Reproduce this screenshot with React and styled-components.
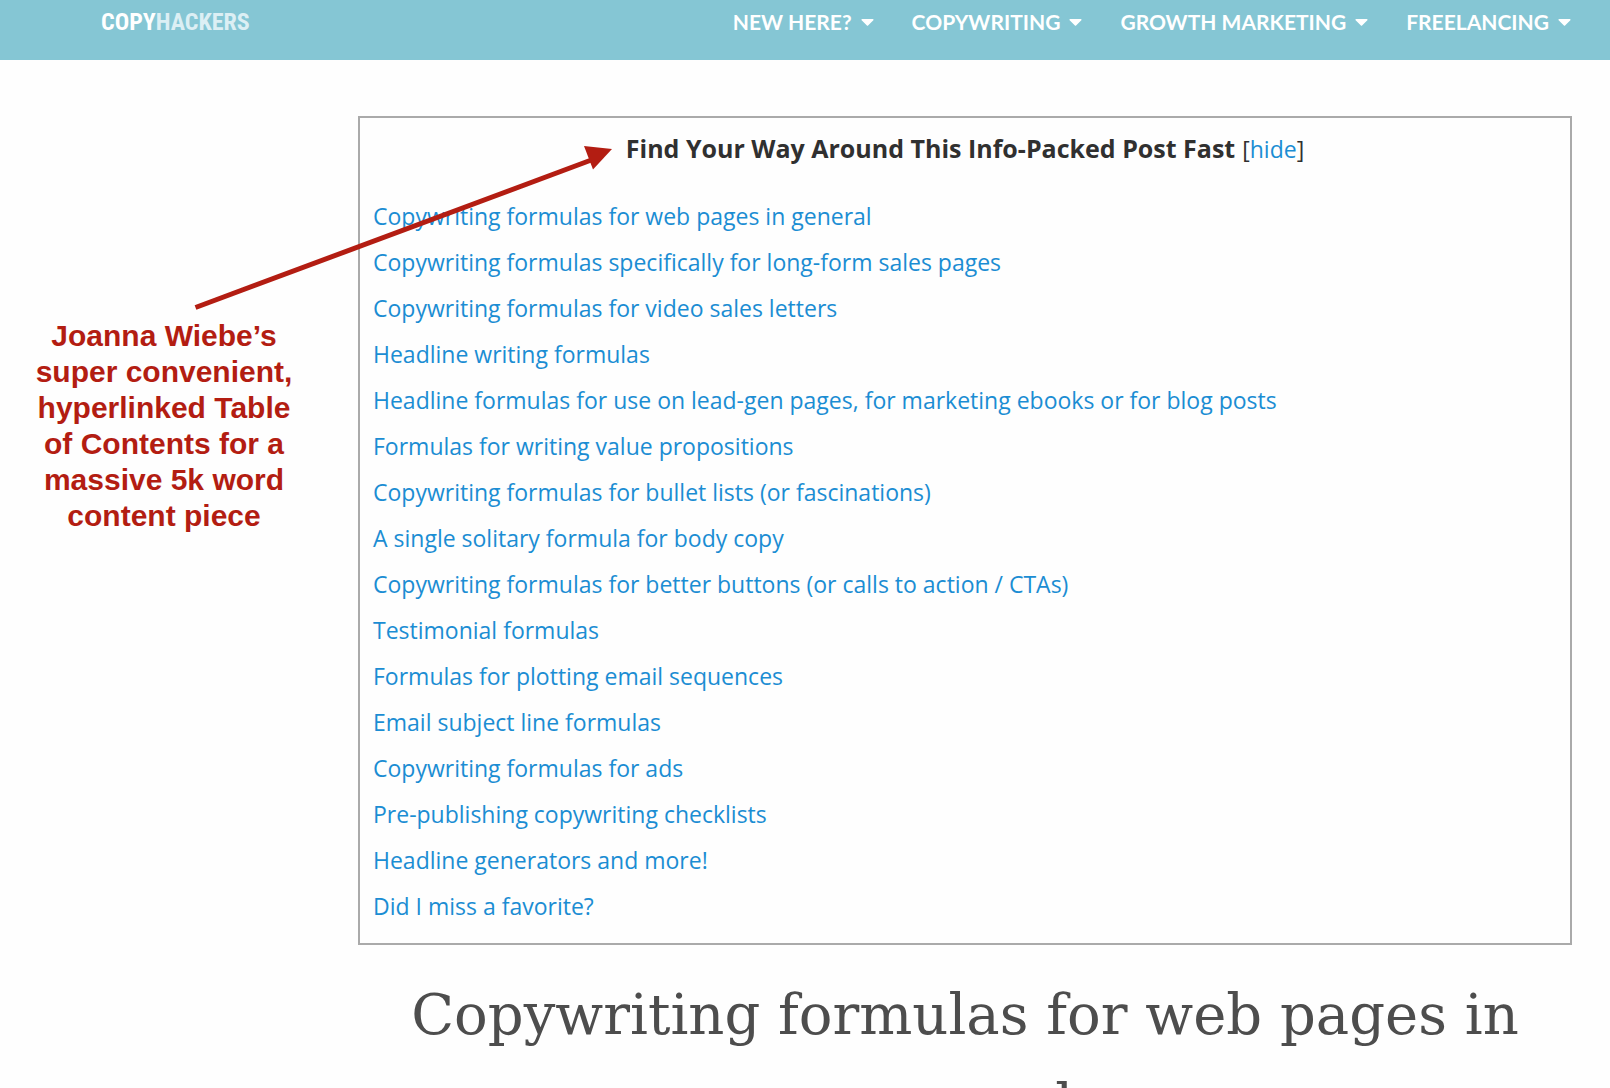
import styled, { createGlobalStyle } from 'styled-components';
import { useState } from 'react';
import { FaCaretDown } from 'react-icons/fa';

const menu = ['New here?', 'Copywriting', 'Growth marketing', 'Freelancing'];

const sections = [
	'Copywriting formulas for web pages in general',
	'Copywriting formulas specifically for long-form sales pages',
	'Copywriting formulas for video sales letters',
	'Headline writing formulas',
	'Headline formulas for use on lead-gen pages, for marketing ebooks or for blog posts',
	'Formulas for writing value propositions',
	'Copywriting formulas for bullet lists (or fascinations)',
	'A single solitary formula for body copy',
	'Copywriting formulas for better buttons (or calls to action / CTAs)',
	'Testimonial formulas',
	'Formulas for plotting email sequences',
	'Email subject line formulas',
	'Copywriting formulas for ads',
	'Pre-publishing copywriting checklists',
	'Headline generators and more!',
	'Did I miss a favorite?',
];

const App = () => {
	const [open, setOpen] = useState(true);

	return (
		<>
			<GlobalStyle />
			<Header>
				<Logo href="#home">
					COPY<LogoLight>HACKERS</LogoLight>
				</Logo>
				<Nav>
					{menu.map((item) => (
						<NavLink key={item} href="#menu">
							{item}
							<FaCaretDown size={21} />
						</NavLink>
					))}
				</Nav>
			</Header>
			<Page>
				<Note>
					Joanna Wiebe’s super convenient, hyperlinked Table of Contents for a massive 5k word
					content piece
				</Note>
				<Arrow viewBox="0 0 420 166" aria-hidden="true">
					<path d="M1.5 161.5L400 13" stroke="#b31d12" strokeWidth="5" />
					<path d="M390 0L418 3L399 23.5Z" fill="#b31d12" />
				</Arrow>
				<main>
					<Toc>
						<TocTitle>
							<strong>Find Your Way Around This Info-Packed Post Fast</strong>
							<span>
								[<Toggle onClick={() => setOpen(!open)}>{open ? 'hide' : 'show'}</Toggle>]
							</span>
						</TocTitle>
						{open && (
							<TocList>
								{sections.map((section, i) => (
									<li key={section}>
										<TocLink href={`#section-${i + 1}`}>{section}</TocLink>
									</li>
								))}
							</TocList>
						)}
					</Toc>
					<Heading id="section-1">Copywriting formulas for web pages in general</Heading>
				</main>
			</Page>
		</>
	);
};

const GlobalStyle = createGlobalStyle`
	* {
		box-sizing: border-box;
	}
	body {
		margin: 0;
		background-color: #fefefe;
		color: #303030;
		font-family: 'Open Sans', sans-serif;
		font-size: 23px;
	}
	a {
		text-decoration: none;
	}
`;

const Header = styled.header`
	display: flex;
	justify-content: space-between;
	height: 60px;
	padding: 0 35px 16px 101px;
	background-color: #85c6d4;
`;

const Logo = styled.a`
	display: flex;
	align-items: center;
	color: white;
	font-family: 'Roboto Condensed', 'Liberation Sans Narrow', sans-serif;
	font-size: 24px;
	font-weight: 700;
`;

const LogoLight = styled.span`
	color: #dceff4;
`;

const Nav = styled.nav`
	display: flex;
	align-items: center;
	gap: 34px;
	padding-bottom: 2px;
`;

const NavLink = styled.a`
	display: flex;
	align-items: center;
	gap: 5px;
	color: white;
	font-family: Lato, sans-serif;
	font-size: 21px;
	font-weight: 700;
	text-transform: uppercase;
`;

const Page = styled.div`
	position: relative;
	display: grid;
	grid-template-columns: 264px minmax(0, 1fr);
	column-gap: 62px;
	padding: 56px 38px 0 32px;
`;

const Note = styled.aside`
	padding-top: 202px;
	color: #b31d12;
	font-family: 'Liberation Sans', Arial, sans-serif;
	font-size: 30px;
	font-weight: 700;
	line-height: 36px;
	text-align: center;
`;

/* runs over the box border, from the note up to the title */
const Arrow = styled.svg`
	position: absolute;
	top: 86px;
	left: 194px;
	width: 420px;
	height: 166px;
	pointer-events: none;
`;

const Toc = styled.section`
	padding: 12px 13px 14px;
	border: 2px solid #aaa;
`;

const TocTitle = styled.div`
	display: flex;
	align-items: baseline;
	justify-content: center;
	gap: 7px;
	line-height: 36px;

	strong {
		font-size: 25px;
	}
`;

const Toggle = styled.button`
	border: none;
	padding: 0;
	background: none;
	color: #1b8dd3;
	font: inherit;
	cursor: pointer;
`;

const TocList = styled.ul`
	list-style: none;
	margin: 26px 0 0;
	padding: 0;
	line-height: 46px;
`;

const TocLink = styled.a`
	color: #1b8dd3;
	&:hover {
		text-decoration: underline;
	}
`;

const Heading = styled.h2`
	margin: 25px 0 0;
	color: #4d4d4d;
	font-family: 'Roboto Slab', 'DejaVu Serif', serif;
	font-size: 56px;
	font-weight: 400;
	line-height: 90px;
	text-align: center;
`;

export default App;
